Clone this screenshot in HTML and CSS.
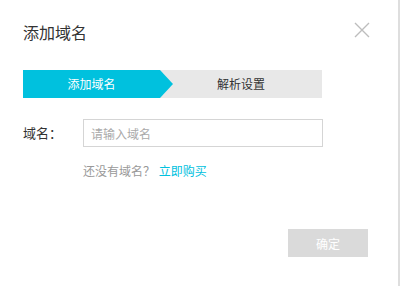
FILE: index.html
```html
<!DOCTYPE html>
<html lang="zh-CN">
<head>
<meta charset="utf-8">
<title>添加域名</title>
<link rel="stylesheet" href="styles.css">
</head>
<body>
<div class="dialog">
  <div class="header">
    <h1 class="title">添加域名</h1>
    <button class="close" type="button" aria-label="关闭">
      <svg width="16" height="16" viewBox="0 0 16 16"><path d="M1 1L15 15M15 1L1 15" stroke="#bdbdbd" stroke-width="1.4" fill="none"/></svg>
    </button>
  </div>
  <div class="steps">
    <div class="step step-active">添加域名</div>
    <div class="step step-next">解析设置</div>
  </div>
  <div class="form-row">
    <label class="label" for="domain">域名：</label>
    <input class="input" id="domain" type="text" placeholder="请输入域名">
  </div>
  <div class="hint">
    <span class="hint-text">还没有域名？</span>
    <a class="hint-link" href="#">立即购买</a>
  </div>
  <div class="footer">
    <button class="btn-ok" type="button">确定</button>
  </div>
</div>
</body>
</html>
```
FILE: styles.css
```css
* { box-sizing: border-box; }
html, body {
  margin: 0;
  padding: 0;
  background: #fff;
}
body {
  font-family: "Noto Sans CJK SC", "Noto Sans", sans-serif;
  color: #333;
}
.dialog {
  width: 400px;
  height: 286px;
  border-right: 2px solid #dedede;
  padding-left: 23px;
}
.header {
  display: flex;
  justify-content: space-between;
  align-items: flex-start;
  padding-top: 21px;
  padding-right: 28px;
}
.title {
  margin: 0;
  font-size: 16px;
  line-height: 22px;
  font-weight: normal;
  color: #333;
}
.close {
  margin-top: 1px;
  padding: 0;
  border: 0;
  background: none;
  width: 16px;
  height: 16px;
  display: block;
}
.close svg { display: block; }
.steps {
  margin-top: 27px;
  width: 299px;
  height: 28px;
  background: #e8e8e8;
  display: flex;
}
.step {
  font-size: 12px;
  line-height: 28px;
  text-align: center;
}
.step-active {
  width: 150px;
  padding-right: 13px;
  background: #00c1de;
  color: #fff;
  clip-path: polygon(0 0, 137px 0, 150px 50%, 137px 100%, 0 100%);
}
.step-next {
  flex: 1;
  padding-right: 13px;
  color: #333;
}
.form-row {
  margin-top: 21px;
  display: flex;
  align-items: center;
}
.label {
  width: 60px;
  font-size: 13px;
  color: #333;
  line-height: 20px;
}
.input {
  width: 240px;
  height: 28px;
  border: 1px solid #d5d5d5;
  padding: 0 7px;
  font-family: inherit;
  font-size: 12px;
  color: #333;
  outline: none;
}
.input::placeholder { color: #aaa; }
.hint {
  margin-top: 14px;
  padding-left: 60px;
  font-size: 12px;
  line-height: 20px;
}
.hint-text { color: #999; }
.hint-link {
  color: #00c1de;
  text-decoration: none;
  margin-left: 1px;
}
.footer {
  margin-top: 48px;
  display: flex;
  justify-content: flex-end;
  padding-right: 30px;
}
.btn-ok {
  width: 80px;
  height: 28px;
  border: 0;
  background: #dadada;
  color: #fff;
  font-family: inherit;
  font-size: 12px;
  padding: 0;
}
```
